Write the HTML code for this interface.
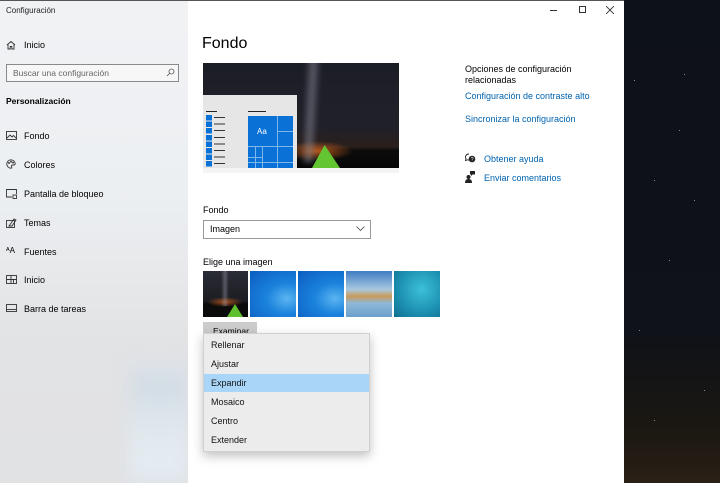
<!DOCTYPE html>
<html><head><meta charset="utf-8">
<style>
*{margin:0;padding:0;box-sizing:border-box}
body{width:720px;height:483px;overflow:hidden;font-family:"Liberation Sans",sans-serif;position:relative;background:#0b0e14}
.sky{position:absolute;left:624px;top:0;width:96px;height:483px;background:linear-gradient(180deg,#0d1118 0,#0f1218 70%,#1c1812 90%,#2a2016 100%)}
.star{position:absolute;width:1px;height:1px;background:#888}
.side{position:absolute;left:0;top:0;width:188px;height:483px;background:linear-gradient(180deg,#f1f2f4 0,#eceff2 40%,#e2e3e5 70%,#e1e2e4 100%)}
.side .blob{position:absolute;left:130px;top:360px;width:58px;height:120px;background:linear-gradient(180deg,#dfe4ea,#d2dce4 20%,#dde6ec 50%,#e4ecf2 80%,#e0eaf2);filter:blur(8px)}
.main{position:absolute;left:188px;top:0;width:436px;height:483px;background:#fff}
.t{position:absolute;font-size:9px;color:#000;white-space:nowrap}
.ico{position:absolute}
.link{color:#0063b1}
.menu{position:absolute;left:203px;top:333px;width:167px;height:119px;background:#ececec;border:1px solid #d0d0d0;box-shadow:0 4px 10px rgba(0,0,0,.25)}
.menu div{position:absolute;left:0;width:165px;height:18px;font-size:9px;line-height:18px;padding-left:7px;color:#111}
</style></head><body>
<div class="sky">
<div class="star" style="left:60px;top:74px"></div><div class="star" style="left:10px;top:80px"></div><div class="star" style="left:55px;top:130px"></div><div class="star" style="left:70px;top:200px"></div><div class="star" style="left:30px;top:180px"></div><div class="star" style="left:45px;top:260px"></div><div class="star" style="left:15px;top:330px"></div><div class="star" style="left:80px;top:390px"></div><div class="star" style="left:30px;top:420px"></div>
</div>
<div class="side"><div class="blob"></div></div>
<div class="main"></div>
<div style="position:absolute;left:0;top:0;width:624px;height:1px;background:#555"></div>

<div class="t" style="left:6px;top:6px;font-size:8px;color:#222">Configuración</div>
<svg class="ico" style="left:6px;top:40px" width="10" height="10" viewBox="0 0 10 10" fill="none" stroke="#333" stroke-width=".9"><path d="M1 5L5 1.5 9 5M2 4.2V9h2.2V6.5h1.6V9H8V4.2"/></svg>
<div class="t" style="left:24px;top:40px">Inicio</div>
<div style="position:absolute;left:6px;top:64px;width:173px;height:18px;border:1px solid #8a8a8a;background:#f7f7f7"></div>
<div class="t" style="left:13px;top:68px;color:#666;font-size:8.5px">Buscar una configuración</div>
<svg class="ico" style="left:166px;top:68px" width="9" height="9" viewBox="0 0 9 9" fill="none" stroke="#555" stroke-width=".8"><circle cx="5.5" cy="3.5" r="2.5"/><path d="M3.7 5.3L1 8"/></svg>
<div class="t" style="left:6px;top:96px;font-weight:bold;font-size:8.5px">Personalización</div>

<svg class="ico" style="left:6px;top:131px" width="11" height="9" viewBox="0 0 11 9" fill="none" stroke="#333" stroke-width=".9"><rect x=".5" y=".5" width="10" height="8"/><path d="M1 7l3-3 2 2 1.5-1.5L10 7"/></svg>
<div class="t" style="left:24px;top:131px">Fondo</div>
<svg class="ico" style="left:6px;top:159px" width="10" height="10" viewBox="0 0 10 10" fill="none" stroke="#333" stroke-width=".9"><path d="M5 .8a4.2 4.2 0 100 8.4c1 0 1-1 .5-1.6S5.5 6 6.5 6H8A1.4 1.4 0 009.2 4.6 4.3 4.3 0 005 .8z"/><circle cx="3" cy="4" r=".5"/><circle cx="5" cy="2.7" r=".5"/><circle cx="7" cy="3.6" r=".5"/></svg>
<div class="t" style="left:24px;top:160px">Colores</div>
<svg class="ico" style="left:6px;top:189px" width="11" height="10" viewBox="0 0 11 10" fill="none" stroke="#333" stroke-width=".9"><path d="M6 8H.5V.5h10V5"/><rect x="7" y="6" width="3.5" height="3.5"/></svg>
<div class="t" style="left:24px;top:189px">Pantalla de bloqueo</div>
<svg class="ico" style="left:6px;top:218px" width="11" height="10" viewBox="0 0 11 10" fill="none" stroke="#333" stroke-width=".9"><rect x=".5" y="2.5" width="8" height="7"/><path d="M3 8l5-7 2 1-4 6z"/></svg>
<div class="t" style="left:24px;top:218px">Temas</div>
<div class="t" style="left:6px;top:246px;font-size:8px">ᴬA</div>
<div class="t" style="left:24px;top:247px">Fuentes</div>
<svg class="ico" style="left:6px;top:275px" width="11" height="9" viewBox="0 0 11 9" fill="none" stroke="#333" stroke-width=".9"><rect x=".5" y=".5" width="10" height="8"/><path d="M.5 4.5h10M5 .5v8M7.5 4.5v4"/></svg>
<div class="t" style="left:24px;top:275px">Inicio</div>
<svg class="ico" style="left:6px;top:304px" width="11" height="8" viewBox="0 0 11 8" fill="none" stroke="#333" stroke-width=".9"><rect x=".5" y=".5" width="10" height="7"/><path d="M.5 5.5h10"/></svg>
<div class="t" style="left:24px;top:304px">Barra de tareas</div>

<div style="position:absolute;left:550px;top:10px;width:7px;height:1px;background:#333"></div>
<div style="position:absolute;left:579px;top:6px;width:7px;height:7px;border:1px solid #333"></div>
<svg class="ico" style="left:606px;top:6px" width="8" height="8" viewBox="0 0 8 8" stroke="#333" stroke-width=".9"><path d="M0 0l8 8M8 0L0 8"/></svg>

<div class="t" style="left:202px;top:35px;font-size:16px">Fondo</div>
<div style="position:absolute;left:203px;top:63px;width:196px;height:105px;overflow:hidden;background:radial-gradient(ellipse 35px 10px at 115px 88px,rgba(210,100,30,.85),transparent),linear-gradient(180deg,#1c1e26 0,#202029 60%,#2a1f1c 80%,#0c0c0c 83%,#070707 100%)">
<div style="position:absolute;left:100px;top:-10px;width:16px;height:110px;background:linear-gradient(90deg,transparent,rgba(150,150,165,.5),transparent);transform:rotate(3deg);filter:blur(2px)"></div>
</div>
<div style="position:absolute;left:312px;top:145px;width:28px;height:23px;background:#63c532;clip-path:polygon(45% 0,100% 100%,0 100%)"></div>
<div style="position:absolute;left:203px;top:168px;width:196px;height:5px;background:#f4f4f4"></div>
<div style="position:absolute;left:203px;top:95px;width:94px;height:73px;background:#e6e6e6"></div>
<div style="position:absolute;left:206px;top:111px;width:11px;height:1px;background:#222"></div>
<div style="position:absolute;left:248px;top:111px;width:18px;height:1px;background:#222"></div>
<div style="position:absolute;left:206px;top:115px;width:6px;height:53px;background:repeating-linear-gradient(180deg,#0a72d6 0 5.5px,#e6e6e6 5.5px 6.6px)"></div>
<div style="position:absolute;left:214px;top:117px;width:11px;height:51px;background:repeating-linear-gradient(180deg,#333 0 1px,transparent 1px 6.6px)"></div>
<div style="position:absolute;left:248px;top:116px;width:45px;height:52px;background:#0a72d6"></div>
<div style="position:absolute;left:248px;top:116px;width:45px;height:52px;background:linear-gradient(#7fb6ea,#7fb6ea) 29px 0/1px 52px no-repeat,linear-gradient(#7fb6ea,#7fb6ea) 29px 15px/16px 1px no-repeat,linear-gradient(#7fb6ea,#7fb6ea) 0 30px/45px 1px no-repeat,linear-gradient(#7fb6ea,#7fb6ea) 7px 30px/1px 22px no-repeat,linear-gradient(#7fb6ea,#7fb6ea) 14px 30px/1px 22px no-repeat,linear-gradient(#7fb6ea,#7fb6ea) 0 41px/15px 1px no-repeat,linear-gradient(#7fb6ea,#7fb6ea) 0 46px/45px 1px no-repeat"></div>
<div class="t" style="left:257px;top:127px;color:#fff;font-size:8px">Aa</div>

<div class="t" style="left:465px;top:64px">Opciones de configuración</div>
<div class="t" style="left:465px;top:75px">relacionadas</div>
<div class="t link" style="left:465px;top:91px">Configuración de contraste alto</div>
<div class="t link" style="left:465px;top:114px">Sincronizar la configuración</div>
<svg class="ico" style="left:465px;top:153px" width="11" height="10" viewBox="0 0 11 10"><path d="M4 1a3.3 3 0 00-3 4.5L.5 7.5 2.5 6.8A3.3 3 0 004 7" fill="none" stroke="#222" stroke-width=".9"/><circle cx="7" cy="6" r="3.3" fill="#222"/><text x="5.8" y="8" font-size="5" fill="#fff" font-family="Liberation Sans">?</text></svg>
<div class="t link" style="left:484px;top:154px">Obtener ayuda</div>
<svg class="ico" style="left:465px;top:171px" width="10" height="12" viewBox="0 0 10 12" fill="#222"><circle cx="3.5" cy="6" r="2"/><path d="M0 12c0-3 1.5-4 3.5-4S7 9 7 12z"/><path d="M5 0h5v3.5H7.5L6 5V3.5H5z"/></svg>
<div class="t link" style="left:484px;top:173px">Enviar comentarios</div>

<div class="t" style="left:203px;top:205px">Fondo</div>
<div style="position:absolute;left:203px;top:220px;width:168px;height:19px;border:1.5px solid #999;background:#fff"></div>
<div class="t" style="left:210px;top:224px">Imagen</div>
<svg class="ico" style="left:356px;top:226px" width="9" height="5" viewBox="0 0 9 5" fill="none" stroke="#444" stroke-width=".8"><path d="M.5.5l4 4 4-4"/></svg>
<div class="t" style="left:203px;top:257px">Elige una imagen</div>

<div style="position:absolute;left:203px;top:271px;width:45px;height:46px;overflow:hidden;background:radial-gradient(ellipse 18px 5px at 22px 31px,rgba(200,90,30,.8),transparent),linear-gradient(180deg,#2a2c36,#1c1d22 65%,#0b0b0b 72%)">
<div style="position:absolute;left:18px;top:-5px;width:8px;height:40px;background:linear-gradient(90deg,transparent,rgba(150,150,165,.45),transparent)"></div>
<div style="position:absolute;left:24px;top:33px;width:16px;height:13px;background:#5ec02e;clip-path:polygon(50% 0,100% 100%,0 100%)"></div>
</div>
<div style="position:absolute;left:250px;top:271px;width:46px;height:46px;background:radial-gradient(ellipse at 80% 60%,#5ab4f0,#1a82dc 40%,#0c5cc0)"></div>
<div style="position:absolute;left:298px;top:271px;width:46px;height:46px;background:radial-gradient(ellipse at 80% 60%,#5ab4f0,#1a82dc 40%,#0c5cc0)"></div>
<div style="position:absolute;left:346px;top:271px;width:46px;height:46px;background:linear-gradient(180deg,#3e7cc4,#a8c8e0 40%,#c99a5a 55%,#8fb8d8 70%,#6aa0cc)"></div>
<div style="position:absolute;left:394px;top:271px;width:46px;height:46px;background:radial-gradient(ellipse at 60% 40%,#3cc0d8,#1c8fb0 60%,#116e90)"></div>

<div style="position:absolute;left:203px;top:322px;width:54px;height:12px;background:#ccc"></div>
<div class="t" style="left:213px;top:326px;font-size:8.5px">Examinar</div>

<div class="menu">
<div style="top:2px">Rellenar</div>
<div style="top:21px">Ajustar</div>
<div style="top:40px;background:#a9d5f9">Expandir</div>
<div style="top:59px">Mosaico</div>
<div style="top:78px">Centro</div>
<div style="top:97px">Extender</div>
</div>
</body></html>
